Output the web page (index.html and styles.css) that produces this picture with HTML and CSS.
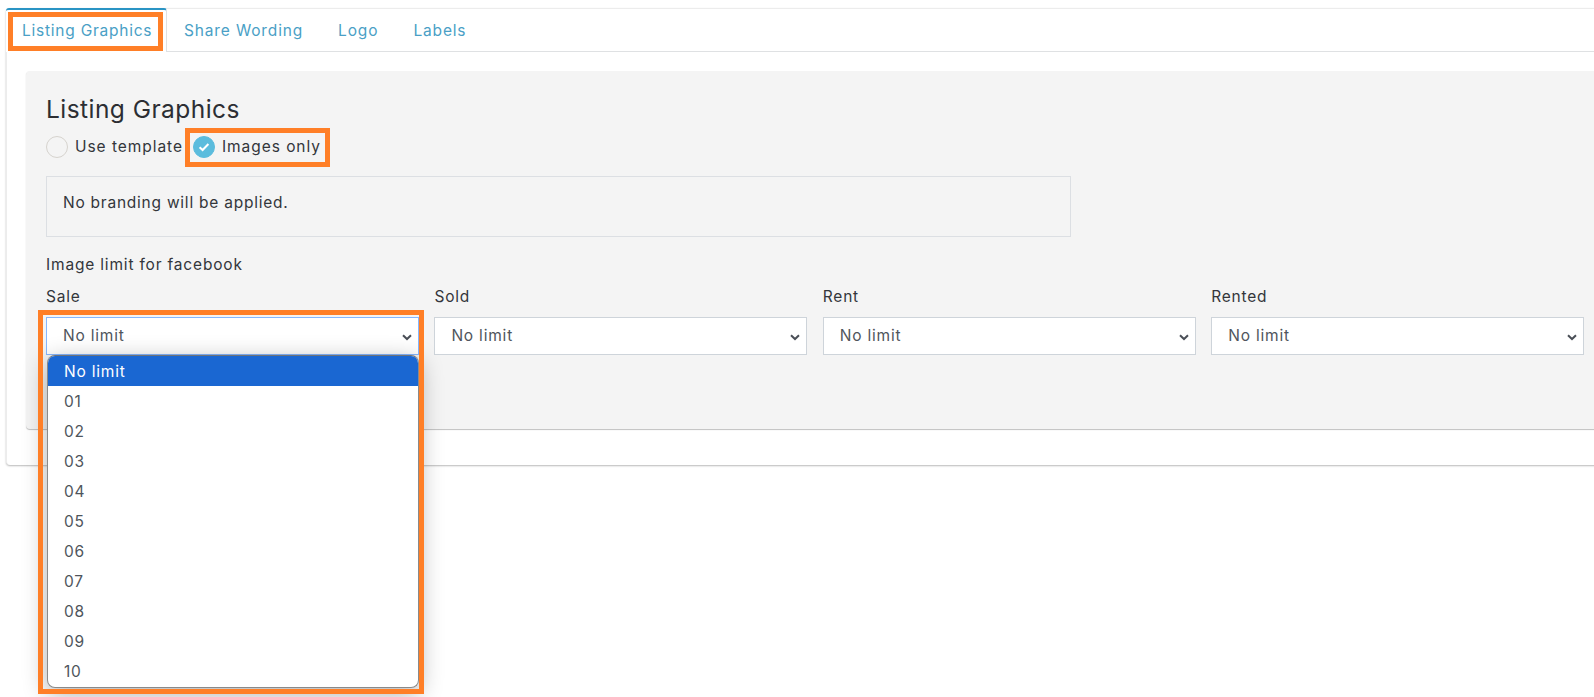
FILE: index.html
```html
<!DOCTYPE html>
<html lang="en">
<head>
<meta charset="utf-8">
<title>Listing Graphics</title>
<link rel="stylesheet" href="styles.css">
</head>
<body>
<div class="card">
  <nav class="tabs">
    <a class="tab active">Listing Graphics</a>
    <a class="tab">Share Wording</a>
    <a class="tab">Logo</a>
    <a class="tab">Labels</a>
  </nav>
  <div class="card-body">
    <section class="panel">
      <h2 class="title">Listing Graphics</h2>
      <div class="radios">
        <label class="radio"><span class="dot"></span>Use template</label>
        <label class="radio"><span class="dot checked"><svg width="12" height="10" viewBox="0 0 12 10"><path d="M1.6 5.2 4.6 8 10.4 2" fill="none" stroke="#fff" stroke-width="2"/></svg></span>Images only</label>
      </div>
      <div class="notice">No branding will be applied.</div>
      <div class="limit-label">Image limit for facebook</div>
      <div class="limits">
        <div class="limit">
          <div class="limit-name">Sale</div>
          <div class="select focus">No limit<svg class="chev" width="10" height="7" viewBox="0 0 10 7"><path d="M1 1.2 5 5 9 1.2" fill="none" stroke="#4a4f57" stroke-width="2"/></svg></div>
        </div>
        <div class="limit">
          <div class="limit-name">Sold</div>
          <div class="select">No limit<svg class="chev" width="10" height="7" viewBox="0 0 10 7"><path d="M1 1.2 5 5 9 1.2" fill="none" stroke="#4a4f57" stroke-width="2"/></svg></div>
        </div>
        <div class="limit">
          <div class="limit-name">Rent</div>
          <div class="select">No limit<svg class="chev" width="10" height="7" viewBox="0 0 10 7"><path d="M1 1.2 5 5 9 1.2" fill="none" stroke="#4a4f57" stroke-width="2"/></svg></div>
        </div>
        <div class="limit">
          <div class="limit-name">Rented</div>
          <div class="select">No limit<svg class="chev" width="10" height="7" viewBox="0 0 10 7"><path d="M1 1.2 5 5 9 1.2" fill="none" stroke="#4a4f57" stroke-width="2"/></svg></div>
        </div>
      </div>
    </section>
  </div>
</div>
<ul class="menu">
  <li class="sel">No limit</li>
  <li>01</li><li>02</li><li>03</li><li>04</li><li>05</li><li>06</li><li>07</li><li>08</li><li>09</li><li>10</li>
</ul>
<div class="mark mark-tab"></div>
<div class="mark mark-radio"></div>
<div class="mark mark-menu"></div>
</body>
</html>
```
FILE: styles.css
```css
* { box-sizing: border-box; }
html, body { margin: 0; height: 697px; overflow: hidden; background: #fff; }
body {
  position: relative;
  font-family: "Inter", "Open Sans", sans-serif;
  font-size: 15.5px;
  color: #33363b;
  padding: 8px 0 0 6px;
}
.card {
  width: 1640px;
  height: 457px;
  background: #fff;
  border-radius: 4px;
  border-top: 1px solid #ececec;
  border-left: 1px solid #ececec;
  box-shadow: 0 1px 2px rgba(0,0,0,.28);
}
.tabs {
  display: flex;
  height: 44px;
  margin-top: -1px;
  border-bottom: 1px solid #dfe1e3;
}
.tab {
  padding: 13px 18px 0 17px;
  color: #4a9fc6;
  letter-spacing: .85px;
  line-height: 20px;
}
.tab.active {
  width: 161px;
  height: 44px;
  margin-left: -1px;
  padding: 11px 0 0 16px;
  letter-spacing: .76px;
  border-top: 2px solid #2a94c4;
  border-right: 1px solid #dfe1e3;
  border-radius: 3px 3px 0 0;
  background: #fff;
}
.card-body { padding: 19px 0 0 19px; }
.panel {
  height: 358px;
  background: #f4f4f4;
  border-radius: 4px;
  box-shadow: 0 1px 1px rgba(0,0,0,.25);
  padding: 24px 0 0 20px;
}
.title {
  margin: 0;
  font-size: 24.5px;
  font-weight: 400;
  line-height: 29px;
  letter-spacing: .45px;
  color: #2c2e33;
}
.radios { display: flex; gap: 10px; margin-top: 12px; height: 22px; }
.radio { display: flex; align-items: center; gap: 7px; letter-spacing: .95px; line-height: 22px; }
.dot {
  flex: none;
  width: 22px;
  height: 22px;
  border-radius: 50%;
  border: 1px solid #d6d3ce;
  display: flex;
  align-items: center;
  justify-content: center;
}
.dot.checked { background: #5bbcdd; border-color: #5bbcdd; }
.notice {
  width: 1025px;
  height: 61px;
  margin-top: 18px;
  border: 1px solid #dcdfe3;
  padding: 16px;
  line-height: 20px;
  letter-spacing: .76px;
}
.limit-label { margin-top: 18px; line-height: 20px; letter-spacing: .82px; }
.limits { display: grid; grid-template-columns: repeat(4, 373px); column-gap: 15.4px; margin-top: 12px; width: 1540px; }
.limit-name { line-height: 20px; letter-spacing: .8px; }
.select {
  position: relative;
  height: 38px;
  margin-top: 10px;
  background: #fff;
  border: 1px solid #ced4da;
  padding: 0 16px 2px;
  display: flex;
  align-items: center;
  color: #4f555c;
  letter-spacing: .8px;
}
.select.focus { border-color: #86b7fe; }
.chev { position: absolute; right: 6px; top: 16px; }
.menu {
  position: absolute;
  left: 47px;
  top: 355px;
  width: 372px;
  height: 333px;
  margin: 0;
  padding: 0;
  list-style: none;
  background: #fff;
  border: 1px solid #8a8a8a;
  border-top-color: #6f7378;
  border-radius: 8px;
  overflow: hidden;
  box-shadow: 0 6px 24px rgba(0,0,0,.32);
  z-index: 2;
}
.menu li {
  height: 30px;
  line-height: 32px;
  padding-left: 16px;
  color: #4f555c;
  letter-spacing: .8px;
}
.menu li.sel { background: #1a67d2; color: #fff; }
.mark { position: absolute; border: 5px solid #ff7f27; z-index: 3; }
.mark-tab { left: 8px; top: 12px; width: 155px; height: 39px; }
.mark-radio { left: 185px; top: 128px; width: 145px; height: 39px; }
.mark-menu { left: 38px; top: 310px; width: 386px; height: 384px; }
```
